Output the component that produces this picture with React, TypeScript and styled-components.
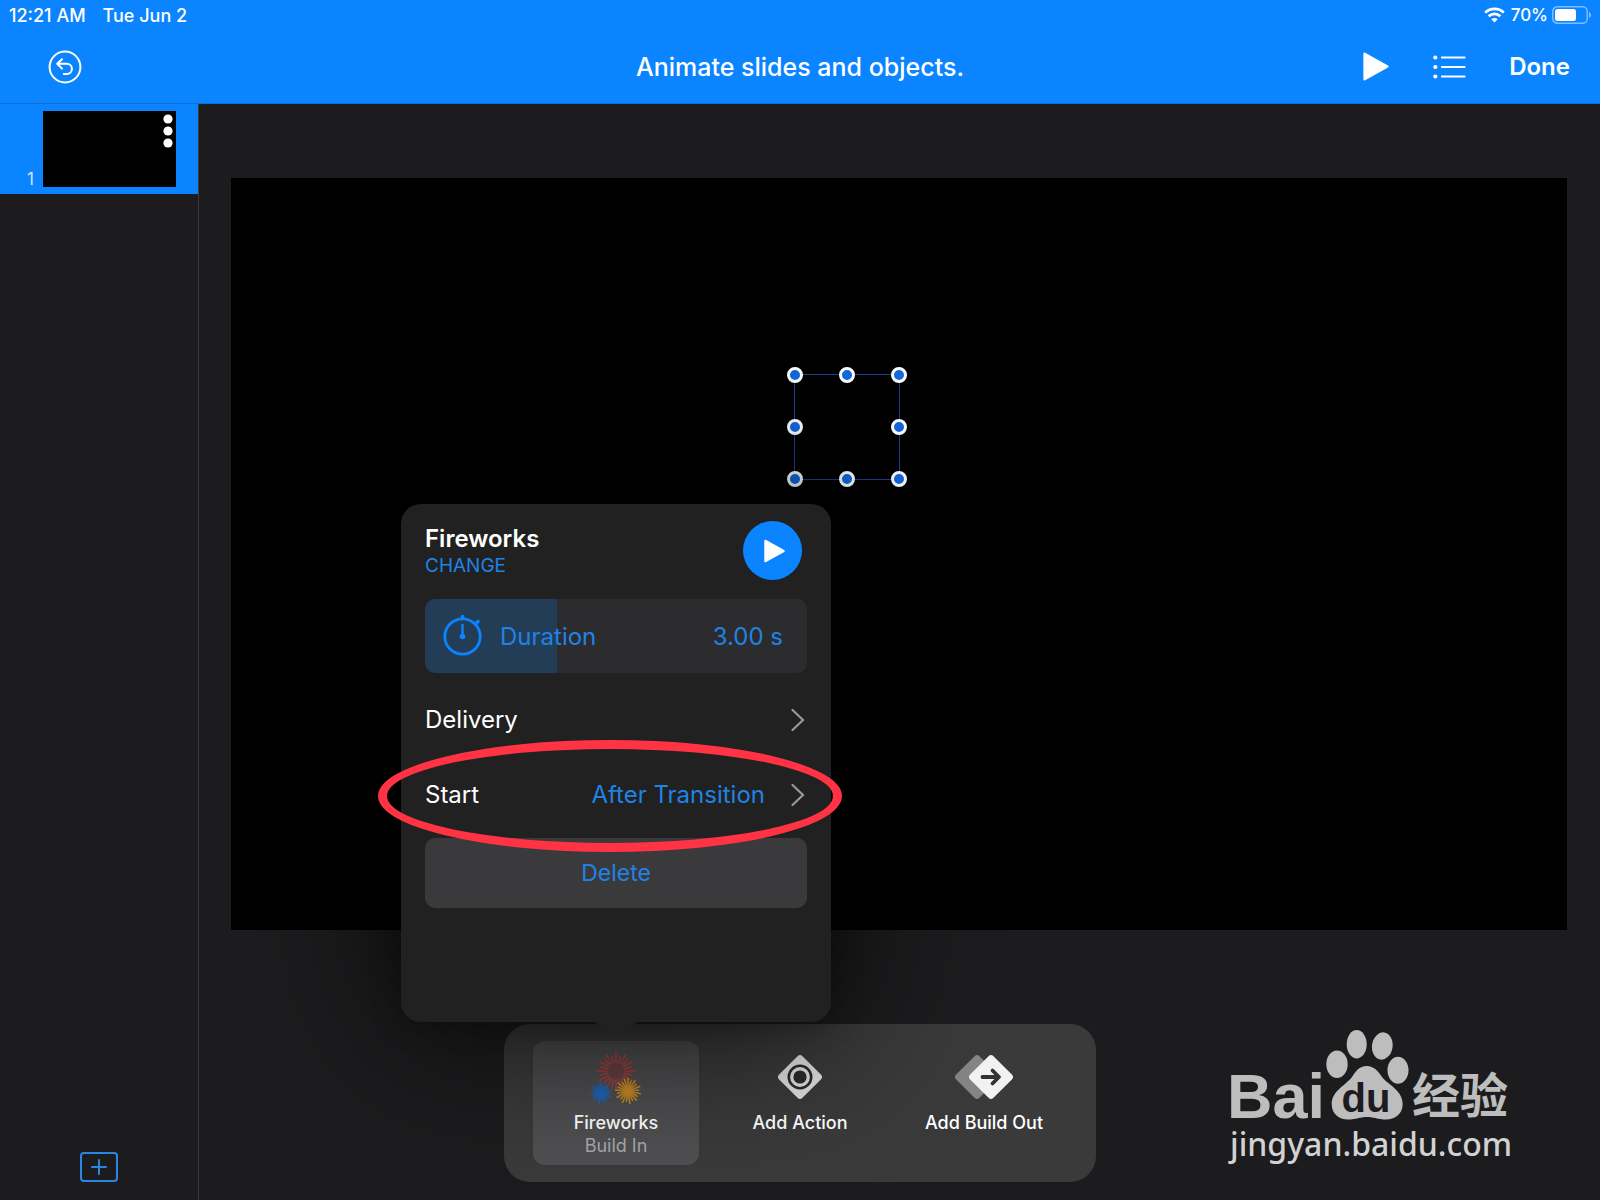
import React, { useState } from "react";
import styled, { createGlobalStyle } from "styled-components";

const BLUE = "#0b84ff";
const LINK = "#1f83e6";

const GlobalStyle = createGlobalStyle`
  *, *::before, *::after { box-sizing: border-box; }
  html { background: #1c1c1e; }
  body {
    margin: 0;
    font-family: Inter, "Liberation Sans", "Noto Sans CJK SC", sans-serif;
    color: #fff;
  }
  button {
    font: inherit;
    color: inherit;
    background: none;
    border: 0;
    padding: 0;
    cursor: pointer;
  }
  svg { display: block; }
`;

const Page = styled.div`
  position: relative;
  display: flex;
  flex-direction: column;
  min-height: 100vh;
  background: #1c1c1e;
  overflow: hidden;
`;

const Header = styled.header`
  background: ${BLUE};
  border-bottom: 1px solid #0a6fd6;
`;

const StatusBar = styled.div`
  display: flex;
  align-items: center;
  justify-content: space-between;
  height: 30px;
  padding: 0 8px 0 9px;
  font-size: 18px;
  font-weight: 500;
`;

const StatusGroup = styled.div<{ $gap: number }>`
  display: flex;
  align-items: center;
  gap: ${(p) => p.$gap}px;
`;

const Battery = styled.span`
  display: flex;
  align-items: center;
  gap: 4px;
  font-size: 17px;
`;

const Nav = styled.nav`
  display: grid;
  grid-template-columns: 1fr auto 1fr;
  align-items: center;
  height: 73px;
  padding: 0 30px 0 48px;
`;

const Title = styled.h1`
  margin: 0 18px 0 0;
  font-size: 25px;
  font-weight: 500;
  line-height: 32px;
`;

const NavActions = styled.div<{ $end?: boolean }>`
  display: flex;
  align-items: center;
  justify-content: ${(p) => (p.$end ? "flex-end" : "flex-start")};
  gap: 43px;
`;

const DoneButton = styled.button`
  font-size: 24px;
  font-weight: 600;
`;

const Workspace = styled.div`
  display: flex;
  flex: 1;
`;

const Sidebar = styled.aside`
  display: flex;
  flex-direction: column;
  justify-content: space-between;
  width: 199px;
  flex-shrink: 0;
  border-right: 1px solid #3a3a3c;
`;

const SlideItem = styled.div`
  display: flex;
  align-items: flex-end;
  gap: 7px;
  padding: 7px 22px 7px 27px;
  background: ${BLUE};
`;

const SlideNumber = styled.span`
  width: 9px;
  font-size: 17px;
  line-height: 16px;
  color: #cfe6ff;
`;

const Thumbnail = styled.div`
  display: flex;
  flex: 1;
  justify-content: flex-end;
  align-items: flex-start;
  height: 76px;
  padding: 3px;
  background: #000;
`;

const AddSlide = styled.button`
  align-self: center;
  margin-bottom: 18px;
`;

const Canvas = styled.main`
  flex: 1;
  padding: 74px 33px 0 32px;
`;

const Slide = styled.div`
  position: relative;
  width: 100%;
  aspect-ratio: 16 / 9;
  background: #000;
`;

const Selection = styled.div`
  position: absolute;
  left: 563px;
  top: 196px;
  width: 106px;
  height: 106px;
  border: 1px solid #1d3f8f;
`;

const Handle = styled.span<{ $x: number; $y: number }>`
  position: absolute;
  left: ${(p) => p.$x}%;
  top: ${(p) => p.$y}%;
  width: 16px;
  height: 16px;
  margin: -8px 0 0 -8px;
  border: 3px solid #fff;
  border-radius: 50%;
  background: #1169dd;
`;

const Toolbar = styled.div`
  position: absolute;
  left: 50%;
  bottom: 18px;
  display: flex;
  gap: 18px;
  padding: 17px 29px;
  border-radius: 26px;
  background: #3a3a3b;
  transform: translateX(-50%);
`;

const ToolSlot = styled.div`
  position: relative;
  width: 166px;
`;

const Tool = styled.button<{ $selected?: boolean }>`
  display: flex;
  flex-direction: column;
  align-items: center;
  width: 100%;
  height: 124px;
  padding-top: 9px;
  border-radius: 12px;
  background: ${(p) =>
    p.$selected ? "linear-gradient(#4c4c4e, #505053)" : "transparent"};
`;

const ToolIcon = styled.span`
  display: flex;
  align-items: center;
  height: 54px;
  margin-bottom: 7px;
`;

const ToolLabel = styled.span<{ $muted?: boolean }>`
  font-size: 18px;
  font-weight: ${(p) => (p.$muted ? 400 : 500)};
  line-height: 23px;
  color: ${(p) => (p.$muted ? "#a7a7ac" : "#fff")};
`;

const Popover = styled.section`
  position: absolute;
  left: 50%;
  bottom: 143px;
  z-index: 2;
  width: 430px;
  padding: 17px 24px 114px;
  border-radius: 20px;
  background: #212121;
  box-shadow:
    0 0 30px rgba(0, 0, 0, 0.35),
    0 0 150px rgba(0, 0, 0, 0.85);
  transform: translateX(-50%);

  &::after {
    content: "";
    position: absolute;
    left: 50%;
    top: 100%;
    width: 44px;
    height: 10px;
    background: #212121;
    clip-path: polygon(0 0, 100% 0, 60% 100%, 40% 100%);
    transform: translateX(-50%);
  }
`;

const PopoverHead = styled.div`
  display: flex;
  align-items: center;
  justify-content: space-between;
  margin-bottom: 19px;
  padding-right: 5px;
`;

const EffectName = styled.h2`
  margin: 0;
  font-size: 24px;
  font-weight: 600;
  line-height: 30px;
`;

const ChangeButton = styled.button`
  display: block;
  font-size: 19px;
  line-height: 24px;
  color: ${LINK};
`;

const PlayButton = styled.button`
  display: grid;
  place-items: center;
  width: 59px;
  height: 59px;
  padding-left: 3px;
  border-radius: 50%;
  background: ${BLUE};
`;

const DurationField = styled.div`
  display: grid;
  height: 74px;
  margin-bottom: 9px;
  border-radius: 10px;
  overflow: hidden;

  & > * {
    grid-area: 1 / 1;
  }
`;

const DurationRange = styled.input<{ $fill: number }>`
  appearance: none;
  width: 100%;
  height: 100%;
  margin: 0;
  cursor: ew-resize;
  background: linear-gradient(
    to right,
    #243d57 ${(p) => p.$fill}%,
    #2c2c2e ${(p) => p.$fill}%
  );

  &::-webkit-slider-thumb {
    appearance: none;
    width: 1px;
    height: 74px;
  }
`;

const DurationCaption = styled.div`
  display: flex;
  align-items: center;
  padding: 0 24px 0 18px;
  font-size: 24px;
  color: ${LINK};
  pointer-events: none;

  label {
    flex: 1;
    margin-left: 17px;
  }
`;

const OptionRow = styled.button`
  position: relative;
  display: flex;
  align-items: center;
  justify-content: space-between;
  width: 100%;
  height: 75px;
  padding-right: 2px;
  font-size: 24px;
`;

const OptionValue = styled.span`
  display: flex;
  align-items: center;
  gap: 26px;
  color: ${LINK};
`;

const Highlight = styled.span`
  position: absolute;
  left: -47px;
  right: -35px;
  top: -17px;
  height: 112px;
  border: 9px solid #ff3344;
  border-radius: 50%;
  pointer-events: none;
`;

const DeleteButton = styled.button`
  width: 100%;
  height: 70px;
  margin-top: 6px;
  border-radius: 10px;
  background: #3a3a3c;
  font-size: 23px;
  color: ${LINK};
`;

const Watermark = styled.div`
  position: absolute;
  right: 84px;
  bottom: 32px;
`;

const WifiIcon = () => (
  <svg width="21" height="16" viewBox="0 0 21 16" fill="none" stroke="#fff" strokeWidth="2.7">
    <path d="M1.2 5.6C6.4.5 14.6.5 19.8 5.6" />
    <path d="M4.7 9.2c3.3-3.1 8.3-3.1 11.6 0" />
    <path d="M10.500 15.400 7.300 12.200c1.900-1.500 4.500-1.500 6.400 0z" fill="#fff" stroke="none" />
  </svg>
);

const BatteryIcon = () => (
  <svg width="40" height="18" viewBox="0 0 40 18">
    <rect x=".8" y=".8" width="34.400" height="16.400" rx="4.500" fill="none" stroke="#7fbdff" strokeWidth="1.500" />
    <rect x="3" y="3" width="21" height="12" rx="2.500" fill="#fff" />
    <path d="M37 6v6c1.300-.5 2-1.700 2-3s-.7-2.500-2-3z" fill="#7fbdff" />
  </svg>
);

const UndoIcon = () => (
  <svg width="34" height="34" viewBox="0 0 34 34" fill="none" stroke="#fff" strokeWidth="2" strokeLinecap="round" strokeLinejoin="round">
    <circle cx="17" cy="17" r="15.400" />
    <path d="M14 9.200 9.200 13.800 14 18.600M9.600 13.800h9.200a5 5 0 0 1 0 10.200h-3" />
  </svg>
);

const PlayIcon = ({ width, height }: { width: number; height: number }) => (
  <svg width={width} height={height} viewBox="0 0 25 28">
    <path d="M1.500 1.800v24.400L23.500 14z" fill="#fff" stroke="#fff" strokeWidth="2.400" strokeLinejoin="round" />
  </svg>
);

const ListIcon = () => (
  <svg width="34" height="26" viewBox="-1 0 34 26" stroke="#fff" strokeWidth="2.200" strokeLinecap="round">
    {[3.5, 13, 22.5].map((y) => (
      <g key={y}>
        <circle cx="2.300" cy={y} r="2.100" fill="#fff" stroke="none" />
        <path d={`M9 ${y}h22.500`} />
      </g>
    ))}
  </svg>
);

const DotsIcon = () => (
  <svg width="10" height="34" viewBox="0 0 10 34" fill="#fff">
    <circle cx="5" cy="5" r="4.600" />
    <circle cx="5" cy="17" r="4.600" />
    <circle cx="5" cy="29" r="4.600" />
  </svg>
);

const AddSlideIcon = () => (
  <svg width="38" height="30" viewBox="0 0 38 30" fill="none" stroke="#2a86e2" strokeWidth="2" strokeLinecap="round">
    <rect x="1" y="1" width="36" height="28" rx="3" />
    <path d="M12 15h14M19 8v14" />
  </svg>
);

const StopwatchIcon = () => (
  <svg width="40" height="44" viewBox="0 0 40 44" fill="none" stroke="#0b84ff" strokeLinecap="round">
    <circle cx="19.500" cy="22.500" r="17.700" strokeWidth="2.800" />
    <path d="M19.500 2.500V4.500M33.500 9l1.500-1.500" strokeWidth="3.600" />
    <path d="M19.500 11V22.500" strokeWidth="2.400" />
    <circle cx="19.500" cy="22.500" r="2.800" fill="#0b84ff" stroke="none" />
  </svg>
);

const ChevronIcon = () => (
  <svg width="14" height="24" viewBox="0 0 14 24" fill="none" stroke="#98989d" strokeWidth="2.200" strokeLinecap="round">
    <path d="M1.500 2 12 12 1.500 22" />
  </svg>
);

const ActionIcon = () => (
  <svg width="46" height="46" viewBox="0 0 46 46">
    <rect x="6.500" y="6.500" width="33" height="33" rx="3.500" fill="#e0e0e0" transform="rotate(45 23 23)" />
    <circle cx="23" cy="23" r="11.200" fill="none" stroke="#2b2b2b" strokeWidth="2.600" />
    <circle cx="23" cy="23" r="6.600" fill="#2b2b2b" />
  </svg>
);

const BuildOutIcon = () => (
  <svg width="60" height="46" viewBox="0 0 60 46">
    <rect x="6.500" y="6.500" width="33" height="33" rx="3.500" fill="#858587" transform="rotate(45 23 23)" />
    <rect x="20.500" y="6.500" width="33" height="33" rx="3.500" fill="#f2f2f2" transform="rotate(45 37 23)" />
    <path d="M28.500 23H44M38.500 16.500 45 23l-6.500 6.500" fill="none" stroke="#333" strokeWidth="3.800" strokeLinecap="round" strokeLinejoin="round" />
  </svg>
);

type BurstProps = { x: number; y: number; inner: number; outer: number; rays: number; color: string; width: number };

const Burst = ({ x, y, inner, outer, rays, color, width }: BurstProps) => (
  <g stroke={color} strokeWidth={width} strokeLinecap="round">
    {Array.from({ length: rays }, (_, i) => {
      const angle = (i / rays) * Math.PI * 2 - Math.PI / 2;
      const reach = outer * (i % 2 ? 0.84 : 1);
      return (
        <line
          key={i}
          x1={x + Math.cos(angle) * inner}
          y1={y + Math.sin(angle) * inner}
          x2={x + Math.cos(angle) * reach}
          y2={y + Math.sin(angle) * reach}
        />
      );
    })}
  </g>
);

const FireworksIcon = () => (
  <svg width="52" height="54" viewBox="0 0 52 54">
    <Burst x={26} y={21} inner={2} outer={15} rays={24} color="#743a3b" width={1} />
    <Burst x={26} y={21} inner={9} outer={19} rays={24} color="#a83c3e" width={1.6} />
    <Burst x={11} y={43} inner={0} outer={10} rays={19} color="#1f66b8" width={1.6} />
    <Burst x={38} y={41} inner={1} outer={12.5} rays={21} color="#c78a22" width={1.6} />
  </svg>
);

const BaiduLogo = () => (
  <svg width="290" height="140" viewBox="0 0 290 140" fill="#bdbdbd" role="img" aria-label="Baidu">
    <text x="1" y="90" fontFamily="Liberation Sans, sans-serif" fontWeight="700" fontSize="63">Bai</text>
    <ellipse cx="111" cy="36.300" rx="10.700" ry="13.700" />
    <ellipse cx="130.700" cy="16.300" rx="10" ry="14.200" />
    <ellipse cx="156.300" cy="18" rx="10.300" ry="13.700" transform="rotate(8 156.300 18)" />
    <ellipse cx="172" cy="42.300" rx="10.500" ry="13.500" />
    <path d="M140.700 38C148 38 152 43 156 49C161 56 176.700 62 176.700 76C176.700 86 169 91.500 160 91.500C152 91.500 148 89 141 89S130 91.500 122 91.500C113 91.500 105.700 86 105.700 76C105.700 63 120 57 126 49C130 43 133 38 140.700 38Z" />
    <text x="140" y="84" textAnchor="middle" fill="#1c1c1e" fontFamily="Liberation Sans, sans-serif" fontWeight="700" fontSize="40">du</text>
    <text x="186" y="85" fontFamily="Noto Sans CJK SC, sans-serif" fontWeight="700" fontSize="48">经验</text>
    <text x="4" y="128" fill="#d2d2d2" fontFamily="Noto Sans, sans-serif" fontWeight="500" fontSize="32">jingyan.baidu.com</text>
  </svg>
);

const HANDLES = [
  [0, 0], [50, 0], [100, 0],
  [0, 50], [100, 50],
  [0, 100], [50, 100], [100, 100],
];

export default function App() {
  const [duration, setDuration] = useState(3);
  const max = 8.7;

  return (
    <Page>
      <GlobalStyle />
      <Header>
        <StatusBar>
          <StatusGroup $gap={17}>
            <span>12:21 AM</span>
            <span>Tue Jun 2</span>
          </StatusGroup>
          <StatusGroup $gap={6}>
            <WifiIcon />
            <Battery>
              70%
              <BatteryIcon />
            </Battery>
          </StatusGroup>
        </StatusBar>
        <Nav>
          <NavActions>
            <button aria-label="Undo"><UndoIcon /></button>
          </NavActions>
          <Title>Animate slides and objects.</Title>
          <NavActions $end>
            <button aria-label="Play"><PlayIcon width={26} height={29} /></button>
            <button aria-label="Build order"><ListIcon /></button>
            <DoneButton>Done</DoneButton>
          </NavActions>
        </Nav>
      </Header>

      <Workspace>
        <Sidebar>
          <SlideItem>
            <SlideNumber>1</SlideNumber>
            <Thumbnail>
              <button aria-label="Slide options"><DotsIcon /></button>
            </Thumbnail>
          </SlideItem>
          <AddSlide aria-label="Add slide"><AddSlideIcon /></AddSlide>
        </Sidebar>
        <Canvas>
          <Slide>
            <Selection>
              {HANDLES.map(([x, y]) => (
                <Handle key={`${x}-${y}`} $x={x} $y={y} />
              ))}
            </Selection>
          </Slide>
        </Canvas>
      </Workspace>

      <Toolbar>
        <ToolSlot>
          <Tool $selected>
            <ToolIcon><FireworksIcon /></ToolIcon>
            <ToolLabel>Fireworks</ToolLabel>
            <ToolLabel $muted>Build In</ToolLabel>
          </Tool>
          <Popover>
            <PopoverHead>
              <div>
                <EffectName>Fireworks</EffectName>
                <ChangeButton>CHANGE</ChangeButton>
              </div>
              <PlayButton aria-label="Preview"><PlayIcon width={21} height={24} /></PlayButton>
            </PopoverHead>
            <DurationField>
              <DurationRange
                id="duration"
                type="range"
                min={0}
                max={max}
                step={0.1}
                value={duration}
                $fill={(duration / max) * 100}
                onChange={(e) => setDuration(Number(e.target.value))}
              />
              <DurationCaption>
                <StopwatchIcon />
                <label htmlFor="duration">Duration</label>
                <output htmlFor="duration">{duration.toFixed(2)} s</output>
              </DurationCaption>
            </DurationField>
            <OptionRow>
              Delivery
              <ChevronIcon />
            </OptionRow>
            <OptionRow>
              Start
              <OptionValue>
                After Transition
                <ChevronIcon />
              </OptionValue>
              <Highlight />
            </OptionRow>
            <DeleteButton>Delete</DeleteButton>
          </Popover>
        </ToolSlot>
        <ToolSlot>
          <Tool>
            <ToolIcon><ActionIcon /></ToolIcon>
            <ToolLabel>Add Action</ToolLabel>
          </Tool>
        </ToolSlot>
        <ToolSlot>
          <Tool>
            <ToolIcon><BuildOutIcon /></ToolIcon>
            <ToolLabel>Add Build Out</ToolLabel>
          </Tool>
        </ToolSlot>
      </Toolbar>

      <Watermark>
        <BaiduLogo />
      </Watermark>
    </Page>
  );
}
